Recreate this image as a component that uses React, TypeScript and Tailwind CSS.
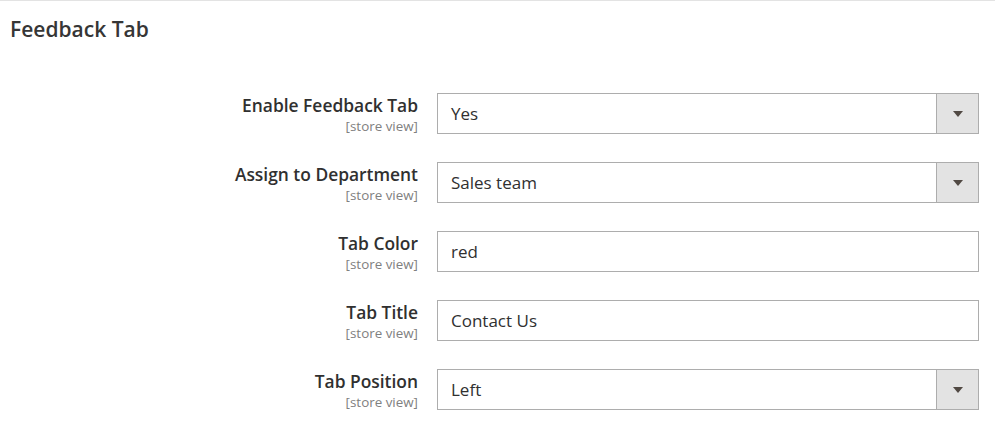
import React from 'react';

type Field = {
  label: string;
  value: string;
  kind: 'select' | 'text';
};

const fields: Field[] = [
  { label: 'Enable Feedback Tab', value: 'Yes', kind: 'select' },
  { label: 'Assign to Department', value: 'Sales team', kind: 'select' },
  { label: 'Tab Color', value: 'red', kind: 'text' },
  { label: 'Tab Title', value: 'Contact Us', kind: 'text' },
  { label: 'Tab Position', value: 'Left', kind: 'select' },
];

function FieldRow({ field }: { field: Field }) {
  return (
    <div className="flex items-start h-[41px]">
      {/* label column */}
      <div className="w-[418px] shrink-0 text-right">
        <div className="text-[17.4px] leading-[24px] font-semibold text-[#303030]">{field.label}</div>
        <div className="text-[13.4px] leading-[18px] text-[#808080]">[store view]</div>
      </div>

      {/* control */}
      <div className="ml-[19px] flex-1 h-[41px] border border-[#adadad] bg-white flex items-stretch">
        <div className="flex-1 flex items-center pl-[13px] text-[17px] text-[#303030]">{field.value}</div>
        {field.kind === 'select' && (
          <div className="w-[42px] border-l border-[#adadad] bg-[#e3e3e3] flex items-center justify-center">
            <svg width="10" height="6" viewBox="0 0 10 6">
              <path d="M0 0 L10 0 L5 6 Z" fill="#514943" />
            </svg>
          </div>
        )}
      </div>
    </div>
  );
}

export default function App() {
  return (
    <div
      className="w-[995px] h-[425px] bg-white border-t border-[#e3e3e3] overflow-hidden"
      style={{ fontFamily: '"Open Sans", "Noto Sans", sans-serif' }}
    >
      <h2 className="pl-[10px] pt-[13px] text-[21px] leading-[30px] font-semibold text-[#363636]">
        Feedback Tab
      </h2>

      <div className="mt-[49px] pr-[16px] flex flex-col gap-[28px]">
        {fields.map((f) => (
          <FieldRow key={f.label} field={f} />
        ))}
      </div>
    </div>
  );
}
